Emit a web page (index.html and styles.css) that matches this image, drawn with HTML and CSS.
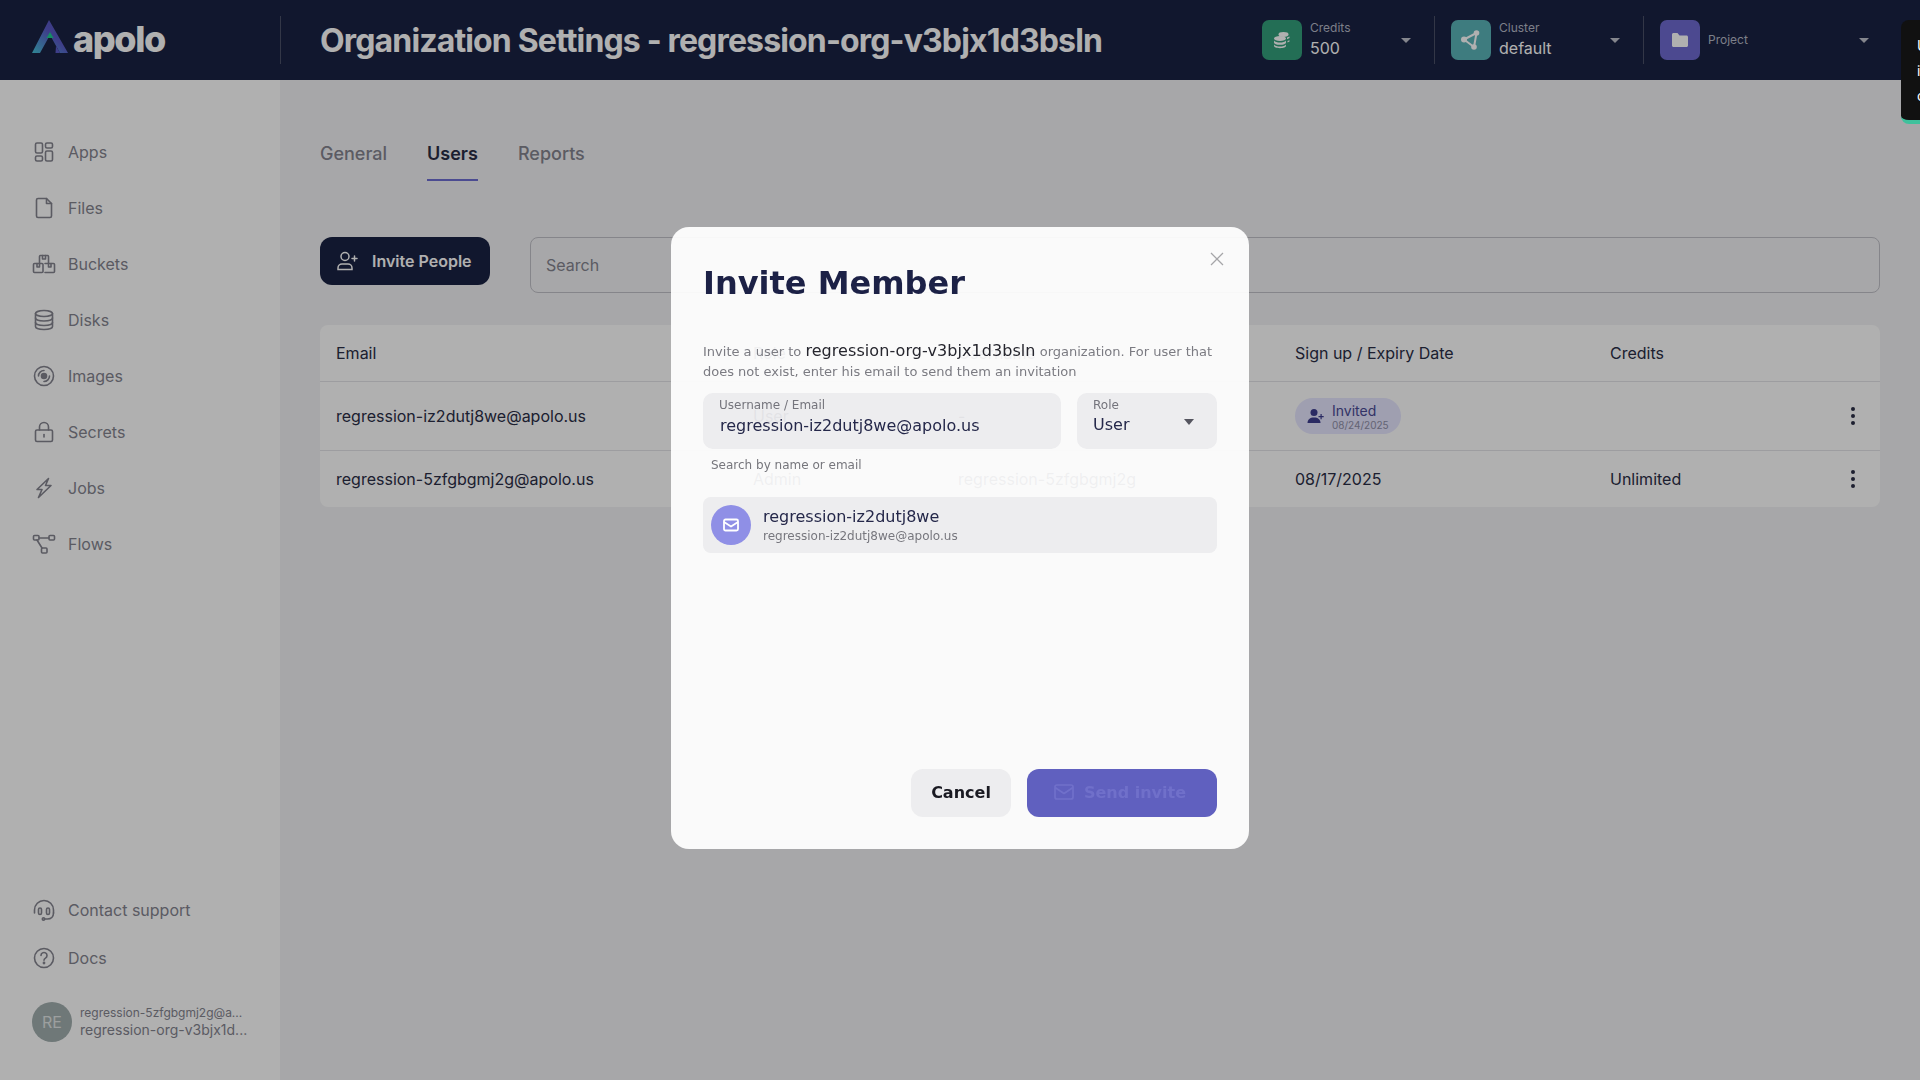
FILE: index.html
```html
<!DOCTYPE html>
<html lang="en">
<head>
  <meta charset="UTF-8">
  <meta name="viewport" content="width=device-width, initial-scale=1.0">
  <title>Organization Settings</title>
  <link rel="stylesheet" href="styles.css">
</head>
<body>

<header class="topbar">
  <div class="brand">
    <svg class="brand-mark" width="36" height="33" viewBox="0 0 36 33">
      <defs>
        <linearGradient id="markGrad" x1="0" y1="1" x2="1" y2="0">
          <stop offset="0" stop-color="#45c3d8"/>
          <stop offset="0.55" stop-color="#5a5ac8"/>
          <stop offset="1" stop-color="#5552b5"/>
        </linearGradient>
      </defs>
      <path d="M17 0 L36 33 L28 33 L18 15 L8 33 L0 33 Z" fill="url(#markGrad)"/>
      <path d="M23.5 33 L28 33 L24 26 Z" fill="#5a5ac8"/>
      <path d="M18 12 L21.5 18 L14.5 18 Z" fill="#1fcb91"/>
    </svg>
    <span class="brand-name">apolo</span>
  </div>
  <div class="topbar-sep"></div>
  <h1 class="page-title">Organization Settings - regression-org-v3bjx1d3bsln</h1>

  <div class="selector selector-credits">
    <span class="selector-icon icon-green">
      <svg width="20" height="20" viewBox="0 0 20 20" fill="#fff">
        <ellipse cx="11.5" cy="4.5" rx="5" ry="2.4"/>
        <ellipse cx="8" cy="8.6" rx="6" ry="2.5"/>
        <path d="M2 10.6c1 1.4 3.4 2 6 2s5-.6 6-2v1.8c0 1.400-2.700 2.400-6 2.400s-6-1-6-2.400z"/>
        <path d="M2 14.400c1 1.400 3.400 2 6 2s5-.6 6-2v1.400c0 1.400-2.700 2.400-6 2.400s-6-1-6-2.400z"/>
        <path d="M15 7.500l2.500-1v1.500L15 9.200zM15.500 11l2-.8v1.400l-2 .9z"/>
      </svg>
    </span>
    <div class="selector-text">
      <span class="selector-label">Credits</span>
      <span class="selector-value">500</span>
    </div>
    <span class="caret"></span>
  </div>
  <div class="topbar-sep"></div>

  <div class="selector selector-cluster">
    <span class="selector-icon icon-teal">
      <svg width="24" height="24" viewBox="0 0 24 24" fill="none" stroke="#fff" stroke-width="2" stroke-linejoin="round">
        <path d="M5 11.500 L17.500 5 L15 19 Z"/>
        <circle cx="5" cy="11.500" r="3" fill="#fff" stroke="none"/>
        <circle cx="17.500" cy="5" r="2.800" fill="#fff" stroke="none"/>
        <circle cx="15" cy="19" r="2.800" fill="#fff" stroke="none"/>
      </svg>
    </span>
    <div class="selector-text">
      <span class="selector-label">Cluster</span>
      <span class="selector-value">default</span>
    </div>
    <span class="caret"></span>
  </div>
  <div class="topbar-sep"></div>

  <div class="selector selector-project">
    <span class="selector-icon icon-indigo">
      <svg width="20" height="20" viewBox="0 0 20 20" fill="#fff">
        <path d="M2 4.500C2 3.700 2.700 3 3.500 3h4l2 2.500h7c.8 0 1.500.7 1.500 1.500v8.500c0 .8-.7 1.500-1.500 1.500h-13C2.700 17 2 16.300 2 15.500z"/>
      </svg>
    </span>
    <div class="selector-text">
      <span class="selector-label">Project</span>
    </div>
    <span class="caret"></span>
  </div>
</header>

<div class="layout">
  <aside class="sidebar">
    <nav class="nav-main">
      <a class="nav-item">
        <svg class="nav-icon" viewBox="0 0 24 24"><rect x="3.500" y="3" width="7" height="10" rx="1.500"/><rect x="13.500" y="3" width="7" height="5" rx="1.500"/><rect x="3.500" y="16" width="7" height="5" rx="1.500"/><rect x="13.500" y="11" width="7" height="10" rx="1.500"/></svg>
        Apps
      </a>
      <a class="nav-item">
        <svg class="nav-icon" viewBox="0 0 24 24"><path d="M6 2.500h8.500L19.500 7.500V20a1.500 1.500 0 0 1-1.500 1.500H6A1.500 1.500 0 0 1 4.500 20V4A1.500 1.500 0 0 1 6 2.500z"/><path d="M14.500 2.500v5h5"/></svg>
        Files
      </a>
      <a class="nav-item">
        <svg class="nav-icon" viewBox="0 0 24 24"><path d="M7.500 11V4.500a1 1 0 0 1 1-1h7a1 1 0 0 1 1 1V11"/><path d="M10.500 3.500V7h3V3.500"/><rect x="1.500" y="11.500" width="9.500" height="9" rx="1"/><path d="M13 11.500h8.500a1 1 0 0 1 1 1v7a1 1 0 0 1-1 1H13"/><path d="M5 11.500V15h2.500v-3.500M16.500 11.500V15H19v-3.500"/></svg>
        Buckets
      </a>
      <a class="nav-item">
        <svg class="nav-icon" viewBox="0 0 24 24"><ellipse cx="12" cy="5.500" rx="8.500" ry="3"/><path d="M3.500 5.500v13c0 1.700 3.800 3 8.500 3s8.500-1.300 8.500-3v-13"/><path d="M3.500 10c0 1.700 3.800 3 8.500 3s8.500-1.300 8.500-3M3.500 14.500c0 1.700 3.800 3 8.500 3s8.500-1.300 8.500-3"/></svg>
        Disks
      </a>
      <a class="nav-item">
        <svg class="nav-icon" viewBox="0 0 24 24"><circle cx="12" cy="12" r="9.500"/><circle cx="12" cy="12" r="2.500" fill="currentColor"/><path d="M6.500 12A5.500 5.500 0 0 1 12 6.500M17.500 12A5.500 5.500 0 0 1 12 17.500"/></svg>
        Images
      </a>
      <a class="nav-item">
        <svg class="nav-icon" viewBox="0 0 24 24"><rect x="3.500" y="10" width="17" height="11.500" rx="1.500"/><path d="M7.500 10V7a4.500 4.500 0 0 1 9 0v3"/><path d="M12 14.500v2.500"/></svg>
        Secrets
      </a>
      <a class="nav-item">
        <svg class="nav-icon" viewBox="0 0 24 24"><path d="M16.500 2.500L5 13.500h5L6.500 21.500 19 9.500h-5.500z"/></svg>
        Jobs
      </a>
      <a class="nav-item">
        <svg class="nav-icon" viewBox="0 0 24 24"><rect x="1.500" y="3.500" width="5.500" height="4.500" rx="1"/><rect x="17" y="3.500" width="5.500" height="4.500" rx="1"/><rect x="9.500" y="16" width="5.500" height="5" rx="1"/><path d="M7 6h10M5 8l5 8"/></svg>
        Flows
      </a>
    </nav>
    <div class="nav-bottom">
      <a class="nav-item nav-item-tight">
        <svg class="nav-icon" viewBox="0 0 24 24"><path d="M2.500 15v-3a9.500 9.500 0 0 1 19 0v3"/><rect x="6.500" y="10" width="3" height="6.500" rx="1.500"/><rect x="14.500" y="10" width="3" height="6.500" rx="1.500"/><path d="M21.500 15c0 3.500-2.500 6-6 6h-3"/><circle cx="11.500" cy="21" r="1.200"/></svg>
        Contact support
      </a>
      <a class="nav-item nav-item-tight">
        <svg class="nav-icon" viewBox="0 0 24 24"><circle cx="12" cy="12" r="9.500"/><path d="M9 9.500a3 3 0 1 1 4.500 2.600c-1 .6-1.500 1.200-1.500 2.200"/><circle cx="12" cy="17" r=".6"/></svg>
        Docs
      </a>
      <div class="account">
        <span class="account-avatar">RE</span>
        <div class="account-text">
          <span class="account-mail">regression-5zfgbgmj2g@a...</span>
          <span class="account-org">regression-org-v3bjx1d...</span>
        </div>
      </div>
    </div>
  </aside>

  <main class="content">
    <div class="tabs">
      <a class="tab">General</a>
      <a class="tab tab-active">Users</a>
      <a class="tab">Reports</a>
    </div>

    <div class="toolbar">
      <button class="invite-btn">
        <svg width="24" height="24" viewBox="0 0 24 24" fill="none" stroke="currentColor" stroke-width="1.500" stroke-linecap="round">
          <circle cx="10" cy="7.500" r="4"/>
          <path d="M3 20.500v-1.500c0-2.500 2-4 4-4h6c2 0 4 1.500 4 4v1.500z"/>
          <path d="M19.500 7v5M17 9.500h5"/>
        </svg>
        Invite People
      </button>
      <div class="search-box">Search</div>
    </div>

    <div class="users-table">
      <div class="row row-head">
        <span>Email</span><span>Role</span><span>Username</span><span>Sign up / Expiry Date</span><span>Credits</span><span></span>
      </div>
      <div class="row row-one">
        <span>regression-iz2dutj8we@apolo.us</span><span>User</span><span>-</span>
        <span class="status">
          <svg width="20" height="20" viewBox="0 0 20 20" fill="currentColor">
            <circle cx="8" cy="6.500" r="3.500"/>
            <path d="M1.500 17c0-3.500 2.500-5.500 6.500-5.500s6.500 2 6.500 5.500z"/>
            <path d="M14.500 8h1.200v2h2v1.200h-2v2h-1.200v-2h-2V10h2z"/>
          </svg>
          <span class="status-text">
            <span class="status-name">Invited</span>
            <span class="status-date">08/24/2025</span>
          </span>
        </span>
        <span></span>
        <span class="kebab"><i></i><i></i><i></i></span>
      </div>
      <div class="row row-two">
        <span>regression-5zfgbgmj2g@apolo.us</span><span>Admin</span><span>regression-5zfgbgmj2g</span><span>08/17/2025</span><span>Unlimited</span>
        <span class="kebab"><i></i><i></i><i></i></span>
      </div>
    </div>
  </main>
</div>

<div class="overlay">
  <div class="modal">
    <svg class="modal-close" width="14" height="14" viewBox="0 0 14 14" fill="none" stroke="currentColor" stroke-width="1.300">
      <path d="M1 1l12 12M13 1L1 13"/>
    </svg>
    <h2 class="modal-title">Invite Member</h2>
    <p class="modal-desc">Invite a user to <span class="modal-org">regression-org-v3bjx1d3bsln</span> organization. For user that does not exist, enter his email to send them an invitation</p>

    <div class="field-row">
      <div class="field field-user">
        <span class="field-label">Username / Email</span>
        <span class="field-value">regression-iz2dutj8we@apolo.us</span>
      </div>
      <div class="field field-role">
        <span class="field-label">Role</span>
        <span class="field-value">User</span>
        <span class="field-caret"></span>
      </div>
    </div>
    <div class="field-help">Search by name or email</div>

    <div class="option">
      <span class="option-avatar">
        <svg width="20" height="20" viewBox="0 0 20 20" fill="none" stroke="#fff" stroke-width="1.800" stroke-linejoin="round">
          <rect x="3" y="4.500" width="14" height="11" rx="1.500"/>
          <path d="M3 7l7 4.500L17 7"/>
        </svg>
      </span>
      <div class="option-text">
        <span class="option-name">regression-iz2dutj8we</span>
        <span class="option-mail">regression-iz2dutj8we@apolo.us</span>
      </div>
    </div>

    <div class="modal-actions">
      <button class="btn-cancel">Cancel</button>
      <button class="btn-send">
        <svg width="22" height="22" viewBox="0 0 22 22" fill="none" stroke="currentColor" stroke-width="1.700" stroke-linejoin="round">
          <rect x="2" y="4" width="18" height="14" rx="2"/>
          <path d="M2 6.500l9 6 9-6"/>
        </svg>
        Send invite
      </button>
    </div>
  </div>
</div>

<div class="toast">
  <span>Un</span>
  <span>in</span>
  <span>co</span>
</div>

</body>
</html>
```

FILE: styles.css
```css
* {
  box-sizing: border-box;
}
html, body {
  height: 100%;
}
body {
  margin: 0;
  font-family: Inter, "Liberation Sans", sans-serif;
  font-size: 16px;
  color: #2a2e46;
  background-color: #f2f2f5;
  overflow: hidden;
}

/* top bar */
.topbar {
  height: 80px;
  background-color: #1a2243;
  display: flex;
  align-items: center;
  color: #fff;
}
.brand {
  width: 280px;
  padding-left: 32px;
  display: flex;
  align-items: center;
  gap: 5px;
}
.brand-mark {
  margin-top: -7px;
}
.brand-name {
  font-size: 36px;
  font-weight: 800;
  letter-spacing: -1.4px;
  line-height: 40px;
  margin-top: -2px;
}
.topbar-sep {
  width: 1px;
  height: 48px;
  background-color: #4a5068;
  flex-shrink: 0;
}
.page-title {
  flex: 1;
  margin: 0;
  padding-left: 39px;
  font-size: 32px;
  font-weight: 700;
  letter-spacing: -0.85px;
  white-space: nowrap;
}
.selector {
  display: flex;
  align-items: center;
  gap: 8px;
  padding-right: 23px;
  flex-shrink: 0;
}
.selector-credits {
  width: 172px;
}
.selector-cluster {
  width: 192px;
  margin-left: 16px;
}
.selector-project {
  width: 260px;
  margin-left: 16px;
  padding-right: 51px;
}
.selector-icon {
  width: 40px;
  height: 40px;
  border-radius: 7px;
  display: flex;
  align-items: center;
  justify-content: center;
  flex-shrink: 0;
}
.icon-green {
  background-color: #33a07b;
}
.icon-teal {
  background-color: #5bb4b8;
}
.icon-indigo {
  background-color: #6e6bd1;
}
.selector-text {
  flex: 1;
  display: flex;
  flex-direction: column;
}
.selector-label {
  font-size: 12px;
  line-height: 16px;
  color: #b4b8c6;
}
.selector-value {
  font-size: 16px;
  line-height: 24px;
}
.caret {
  width: 0;
  height: 0;
  border-left: 5px solid transparent;
  border-right: 5px solid transparent;
  border-top: 5px solid #c0c2cc;
}

.layout {
  display: flex;
  height: 1000px;
}

/* sidebar */
.sidebar {
  width: 280px;
  background-color: #fff;
  padding: 44px 32px 38px;
  display: flex;
  flex-direction: column;
  justify-content: space-between;
  flex-shrink: 0;
}
.nav-item {
  height: 56px;
  display: flex;
  align-items: center;
  gap: 12px;
  color: #84848f;
}
.nav-item-tight {
  height: 48px;
}
.nav-icon {
  width: 24px;
  height: 24px;
  fill: none;
  stroke: currentColor;
  stroke-width: 1.600;
  stroke-linejoin: round;
  stroke-linecap: round;
  flex-shrink: 0;
}
.account {
  display: flex;
  align-items: center;
  gap: 8px;
  margin-top: 20px;
}
.account-avatar {
  width: 40px;
  height: 40px;
  border-radius: 50%;
  background-color: #a1aeae;
  color: #e2e6e6;
  font-size: 16px;
  display: flex;
  align-items: center;
  justify-content: center;
}
.account-text {
  display: flex;
  flex-direction: column;
  color: #84848f;
}
.account-mail {
  font-size: 12px;
  line-height: 16px;
}
.account-org {
  font-size: 14px;
  line-height: 18px;
}

/* main content */
.content {
  flex: 1;
  padding: 49px 40px 0;
}
.tabs {
  display: flex;
  gap: 40px;
  height: 52px;
}
.tab {
  font-size: 18px;
  font-weight: 500;
  line-height: 50px;
  color: #84848f;
  height: 52px;
}
.tab-active {
  color: #2a2e46;
  font-weight: 600;
  border-bottom: 2px solid #6d6dd2;
}
.toolbar {
  margin-top: 56px;
  display: flex;
  align-items: flex-start;
  gap: 40px;
}
.invite-btn {
  width: 170px;
  height: 48px;
  border: none;
  border-radius: 12px;
  background-color: #1a2243;
  color: #fff;
  font-family: inherit;
  font-size: 16px;
  font-weight: 600;
  display: flex;
  align-items: center;
  padding-left: 15px;
  gap: 13px;
}
.search-box {
  flex: 1;
  height: 56px;
  border: 1px solid #c1c1c8;
  border-radius: 8px;
  padding: 0 15px;
  line-height: 54px;
  color: #84848f;
}
.users-table {
  margin-top: 32px;
  background-color: #fff;
  border-radius: 8px;
}
.row {
  display: grid;
  grid-template-columns: 417px 205px 337px 315px 1fr 39px;
  align-items: center;
  padding-left: 16px;
}
.row-head {
  height: 57px;
  border-bottom: 1px solid #e4e4e8;
}
.row-one {
  height: 69px;
  border-bottom: 1px solid #e4e4e8;
}
.row-two {
  height: 56px;
}
.status {
  width: 106px;
  height: 36px;
  border-radius: 18px;
  background-color: #e6e6ff;
  color: #3e3e90;
  display: flex;
  align-items: center;
  gap: 6px;
  padding-left: 11px;
}
.status-text {
  display: flex;
  flex-direction: column;
}
.status-name {
  font-size: 14px;
  line-height: 17px;
  color: #4a4a95;
}
.status-date {
  font-size: 10px;
  line-height: 12px;
  color: #9090a8;
}
.kebab {
  display: flex;
  flex-direction: column;
  align-items: center;
  gap: 3px;
  width: 24px;
}
.kebab i {
  width: 4px;
  height: 4px;
  border-radius: 50%;
  background-color: #2a2e46;
}

.overlay {
  position: fixed;
  inset: 0;
  background-color: rgba(0, 0, 0, 0.31);
  display: flex;
  justify-content: center;
  align-items: flex-start;
  padding-top: 227px;
}
.modal {
  position: relative;
  width: 578px;
  height: 622px;
  background-color: rgba(255, 255, 255, 0.93);
  border-radius: 18px;
  padding: 36px 32px 32px;
  display: flex;
  flex-direction: column;
  font-family: "DejaVu Sans", sans-serif;
}
.modal-close {
  position: absolute;
  top: 25px;
  right: 25px;
  color: #a5a5a8;
}
.modal-title {
  margin: 0;
  font-size: 32px;
  line-height: 40px;
  font-weight: 700;
  color: #1c2146;
}
.modal-desc {
  margin: 38px 0 0;
  font-size: 13px;
  line-height: 20px;
  color: #7b7b82;
}
.modal-org {
  font-size: 16px;
  letter-spacing: 0.07px;
  color: #26262e;
}
.field-row {
  display: flex;
  gap: 16px;
  margin-top: 11px;
}
.field {
  position: relative;
  height: 56px;
  border-radius: 10px;
  background-color: rgba(20, 20, 50, 0.06);
  padding: 4px 16px 0;
  display: flex;
  flex-direction: column;
}
.field-user {
  width: 358px;
}
.field-role {
  flex: 1;
}
.field-label {
  font-size: 12px;
  line-height: 16px;
  color: #74747c;
}
.field-value {
  font-size: 16px;
  line-height: 24px;
  margin-top: 1px;
  color: #25284a;
}
.field-user .field-value {
  margin-left: 1px;
}
.field-role .field-value {
  margin-top: 0;
}
.field-caret {
  position: absolute;
  top: 26px;
  right: 23px;
  border-left: 5px solid transparent;
  border-right: 5px solid transparent;
  border-top: 6px solid #55555f;
}
.field-help {
  margin-top: 8px;
  padding-left: 8px;
  font-size: 12px;
  line-height: 16px;
  color: #76767c;
}
.option {
  margin-top: 24px;
  height: 56px;
  border-radius: 8px;
  background-color: rgba(20, 20, 50, 0.06);
  padding: 0 8px;
  display: flex;
  align-items: center;
  gap: 12px;
}
.option-avatar {
  width: 40px;
  height: 40px;
  border-radius: 50%;
  background-color: #8f8fe6;
  display: flex;
  align-items: center;
  justify-content: center;
}
.option-text {
  display: flex;
  flex-direction: column;
}
.option-name {
  font-size: 16px;
  line-height: 22px;
  color: #25284a;
}
.option-mail {
  font-size: 12px;
  line-height: 16px;
  color: #77777e;
}
.modal-actions {
  margin-top: auto;
  display: flex;
  justify-content: flex-end;
  gap: 16px;
}
.btn-cancel,
.btn-send {
  height: 48px;
  border: none;
  border-radius: 12px;
  font-family: inherit;
  font-size: 16px;
  font-weight: 700;
  display: flex;
  align-items: center;
  justify-content: center;
  padding: 0 0 2px;
}
.btn-cancel {
  width: 100px;
  background-color: #ededef;
  color: #1a1a22;
}
.btn-send {
  width: 190px;
  gap: 9px;
  padding-right: 5px;
  background-color: #6060bf;
  color: #7070ca;
}

/* toast, cut off at the window edge */
.toast {
  position: fixed;
  top: 20px;
  left: 1901px;
  width: 300px;
  height: 104px;
  background-color: #111;
  border-radius: 8px;
  border-bottom: 4px solid #3fc19c;
  padding-left: 16px;
  color: #fff;
  font-size: 14px;
  display: flex;
  flex-direction: column;
  justify-content: center;
  gap: 8px;
}
```
